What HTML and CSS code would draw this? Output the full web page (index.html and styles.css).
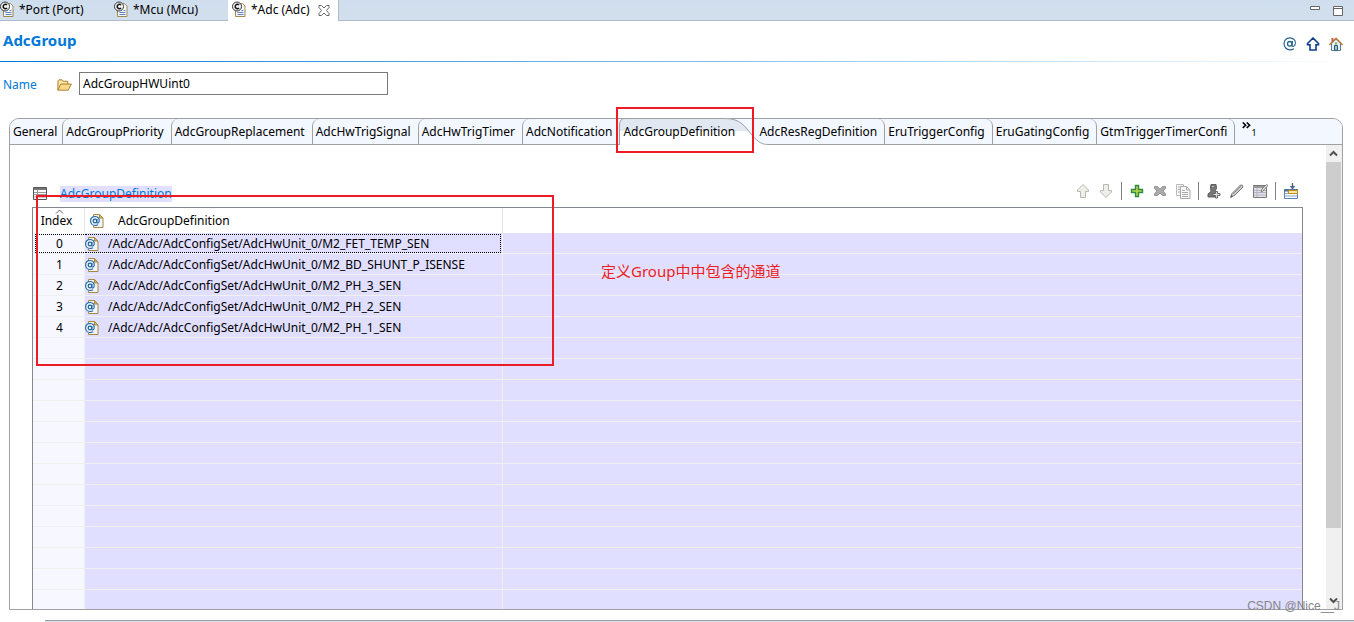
FILE: index.html
```html
<!DOCTYPE html>
<html lang="en">
<head>
<meta charset="utf-8">
<title>AdcGroup</title>
<link rel="stylesheet" href="styles.css">
</head>
<body>
<svg class="defs" aria-hidden="true">
  <symbol id="doc-c" viewBox="0 0 14 16">
    <path d="M3.500 2.500h7l2.500 2.500v10.500h-9.500z" fill="#f3f6fb" stroke="#a08a4c"/>
    <path d="M5.500 11.500h6M5.500 13.500h6M9.500 9.500h2" stroke="#5f86c0"/>
    <circle cx="5" cy="5.500" r="4.500" fill="#f4f4f4" stroke="#333"/>
    <path d="M7 4A2.200 2.200 0 1 0 7 7" fill="none" stroke="#111" stroke-width="1.500"/>
  </symbol>
  <symbol id="at" viewBox="0 0 14 14">
    <circle cx="6.800" cy="6.800" r="2.300" fill="none" stroke="#27628f" stroke-width="1.300"/>
    <path d="M9.500 4l-.6 4.300c0 1.400 1.300 1.500 2.300.6 1.500-1.600 1.400-4.500 0-6.200C8.800.1 4.600.3 2.500 2.600.5 5 .6 8.700 2.700 11c2 2 5.500 2.300 8.300.8" fill="none" stroke="#27628f" stroke-width="1.200"/>
  </symbol>
  <symbol id="doc-at" viewBox="0 0 14 14">
    <path d="M3.500 .5h6l3.500 3.500v9.500h-9.500z" fill="#f1f5fb"/>
    <path d="M3.500 3V.5h6l3.500 3.500v9.500H3.500V12" fill="none" stroke="#a8873c"/>
    <path d="M9.500 .5v3.500h3.500z" fill="#e2b85c" stroke="#a8873c"/>
    <circle cx="5" cy="7" r="5" fill="#e6effa"/>
    <circle cx="5" cy="7" r="1.800" fill="none" stroke="#1d639c" stroke-width="1.200"/>
    <path d="M7 5l-.3 3.400c.6 1 2 .6 2.400-.7C9.800 4.600 8 2.500 5.200 2.500 2.400 2.500.6 4.500.6 7s1.800 4.500 4.400 4.500c1.200 0 2.200-.2 3-.7" fill="none" stroke="#1d639c" stroke-width="1.100"/>
  </symbol>
</svg>

<nav class="editor-tabs">
  <button class="editor-tab"><svg class="i-doc"><use href="#doc-c"/></svg>*Port (Port)</button>
  <button class="editor-tab"><svg class="i-doc"><use href="#doc-c"/></svg>*Mcu (Mcu)</button>
  <button class="editor-tab active"><svg class="i-doc"><use href="#doc-c"/></svg>*Adc (Adc)
    <svg class="i-close" viewBox="0 0 12 11"><path d="M1 .5h2.500l2.500 2.500 2.500-2.500h2.500v2l-2.500 3 2.500 3v2h-2.500l-2.500-2.500-2.500 2.500h-2.500v-2l2.500-3-2.500-3z" fill="#fff" stroke="#666"/></svg>
  </button>
  <div class="window-buttons">
    <button aria-label="Minimize"><svg viewBox="0 0 11 11"><path d="M.5 .5h9v3h-9z" fill="#fff" stroke="#666"/></svg></button>
    <button aria-label="Maximize"><svg viewBox="0 0 11 11"><path d="M.5 .5h9v9h-9zM.5 2.500h9" fill="#fff" stroke="#666"/></svg></button>
  </div>
</nav>

<header class="title-bar">
  <h1>AdcGroup</h1>
  <div class="title-tools">
    <button aria-label="Annotations"><svg viewBox="0 0 14 14"><use href="#at"/></svg></button>
    <button aria-label="Up"><svg viewBox="0 0 14 14"><path d="M7 1L1.500 6.500v1.200H4V13h6V7.700h2.500V6.500z" fill="#fff" stroke="#0b3f8c" stroke-width="1.600"/></svg></button>
    <button aria-label="Home"><svg viewBox="0 0 14 14"><path d="M2.500 6.500v7h9v-7L7 2z" fill="#e6eff6" stroke="#5b7d95"/><path d="M2.500 1h2v3l-2 2z" fill="#c4623a"/><path d="M.5 8L7 1.500 13.500 8" fill="none" stroke="#b97a4a" stroke-width="1.600"/><path d="M5.500 8.500h3v5h-3z" fill="#7fb2d6" stroke="#35617e"/><path d="M6 5.500h2v2H6z" fill="#6fae3a"/><path d="M6.500 10h1v1.500h-1z" fill="#f4e04d"/></svg></button>
  </div>
</header>

<div class="name-row">
  <label for="name">Name</label>
  <svg class="i-folder" viewBox="0 0 16 12"><path d="M1 11.500V1.500l1-1h3.500l1 1.500h5v3" fill="#fbe7a6" stroke="#a97a2a"/><path d="M1 11.500L4 5h11.300L12 11.500z" fill="#f8d98a" stroke="#a97a2a"/></svg>
  <input id="name" type="text" value="AdcGroupHWUint0">
</div>

<main class="folder">
  <div class="folder-tabs">
    <button class="tab">General</button>
    <button class="tab">AdcGroupPriority</button>
    <button class="tab">AdcGroupReplacement</button>
    <button class="tab">AdcHwTrigSignal</button>
    <button class="tab">AdcHwTrigTimer</button>
    <button class="tab">AdcNotification</button>
    <button class="tab selected"><svg class="tab-shape" viewBox="0 0 150 27" aria-hidden="true"><path class="shape-fill" d="M0 27V7Q0 .5 6 .5H106C122 .5 126 9 133 17S143 26 150 26V27z"/><path class="shape-shade" d="M0 13V7Q0 .5 6 .5H106C120 .5 125 6 130 13z"/><path class="shape-line" d="M.5 27V7Q.5 .5 6 .5H106C122 .5 126 9 133 17S143 26.500 150 26.500"/></svg><span>AdcGroupDefinition</span></button>
    <button class="tab after">AdcResRegDefinition</button>
    <button class="tab after">EruTriggerConfig</button>
    <button class="tab after">EruGatingConfig</button>
    <button class="tab after">GtmTriggerTimerConfi</button>
    <button class="more" aria-label="More tabs"><svg viewBox="0 0 9 7"><path d="M.7 .5l3 2.700-3 2.700M4.700 .5l3 2.700-3 2.700" fill="none" stroke="#000" stroke-width="1.500"/></svg><small>1</small></button>
  </div>

  <div class="folder-body">
    <section class="panel">
      <div class="panel-head">
        <svg class="i-table" viewBox="0 0 14 13"><path d="M.5 .5h13v12H.5z" fill="#fff" stroke="#555"/><path d="M1 2h12" stroke="#777" stroke-width="2"/><path d="M1 5.500h12M1 7.500h12M1 10h12M4.500 3v9" stroke="#999"/></svg>
        <h2>AdcGroupDefinition</h2>
        <div class="toolbar">
          <button aria-label="Move up"><svg viewBox="0 0 16 16"><path d="M8 1.500L2.500 7v1.500h3v6h5v-6h3V7z" fill="#eeeeea" stroke="#b9b7ae"/></svg></button>
          <button aria-label="Move down"><svg viewBox="0 0 16 16"><path d="M8 14.500L2.500 9V7.500h3v-6h5v6h3V9z" fill="#eeeeea" stroke="#b9b7ae"/></svg></button>
          <hr>
          <button aria-label="Add"><svg viewBox="0 0 16 16"><path d="M6.500 2.500h3v4h4v3h-4v4h-3v-4h-4v-3h4z" fill="#b9d84a" stroke="#2e8b3d" stroke-width="1.400"/></svg></button>
          <button aria-label="Delete"><svg viewBox="0 0 16 16"><path d="M2.500 3.500h3L8 6l2.500-2.500h3v2L11 8l2.500 2.500v2h-3L8 10l-2.500 2.500h-3v-2L5 8 2.500 5.500z" fill="#aaa" stroke="#999"/></svg></button>
          <button aria-label="Duplicate"><svg viewBox="0 0 16 16"><path d="M1.500 1.500h7v11h-7z" fill="#f7f7f7" stroke="#bbb"/><path d="M3 4h3M3 6.500h3M3 9h3" stroke="#aaa"/><path d="M5.500 3.500h6l3.500 3.500v8.500H5.500z" fill="#fafafa" stroke="#aaa"/><path d="M11.500 3.500V7H15M7 7.500h3M7 9.500h6M7 11.500h6M7 13.500h6" fill="none" stroke="#aaa"/></svg></button>
          <hr>
          <button aria-label="Add reference"><svg viewBox="0 0 16 16"><path d="M5 1.500h5l.5 4L9 8l1 2-1 4H2v-3l3-2.500L4.500 4z" fill="#777" stroke="#5c5c5c"/><path d="M6 3.500h2" stroke="#bbb"/><path d="M9.500 8.500h2v2h2.500v2h-2.500V15h-2v-2.500H7v-2h2.500z" fill="#ddd" stroke="#666"/></svg></button>
          <button aria-label="Edit"><svg viewBox="0 0 16 16"><path d="M1.500 14.500l1.500-4 8.500-8.500q2.500-.5 2.500 2L6 12z" fill="#ccc" stroke="#777"/><path d="M4 11l8-8" stroke="#999"/><path d="M1.500 14.500l1-2.500L4 13.500z" fill="#555"/></svg></button>
          <button aria-label="Edit table"><svg viewBox="0 0 16 16"><path d="M1.500 2.500h13v12h-13z" fill="#e1e1ec" stroke="#777"/><path d="M1 4h13" stroke="#999" stroke-width="2"/><path d="M2 7.500h12M2 9.500h12M2 12h12M5 5v9" stroke="#b4b4c0"/><path d="M9 9l1-3 4.500-4.500 1.500 1L11 8z" fill="#ddd" stroke="#888"/></svg></button>
          <hr>
          <button aria-label="Import"><svg viewBox="0 0 16 16"><path d="M1.500 6.500h13v9h-13z" fill="#f7fbff" stroke="#6082a8"/><path d="M1 7.500h14" stroke="#4d6c91" stroke-width="2"/><path d="M2 10.500h12M2 13h12" stroke="#8aa8c4"/><path d="M5.500 7.500h9v3h-9z" fill="#ffe9a8" stroke="#c98a12"/><path d="M9.500 0v5M7.500 3l2 2.500 2-2.500" fill="none" stroke="#4b6380" stroke-width="1.300"/></svg></button>
        </div>
      </div>

      <div class="table-wrap">
        <table>
          <colgroup><col class="c-index"><col class="c-ref"><col></colgroup>
          <thead><tr>
            <th><svg class="i-sort" viewBox="0 0 9 5"><path d="M1 4.500L4.500 1 8 4.500" fill="none" stroke="#666"/></svg>Index</th>
            <th><div class="head-cell"><svg class="i-at"><use href="#doc-at"/></svg>AdcGroupDefinition</div></th>
            <th></th>
          </tr></thead>
          <tbody>
            <tr class="focused"><td>0</td><td><div class="cell"><svg class="i-at"><use href="#doc-at"/></svg>/Adc/Adc/AdcConfigSet/AdcHwUnit_0/M2_FET_TEMP_SEN</div></td><td></td></tr>
            <tr><td>1</td><td><div class="cell"><svg class="i-at"><use href="#doc-at"/></svg>/Adc/Adc/AdcConfigSet/AdcHwUnit_0/M2_BD_SHUNT_P_ISENSE</div></td><td></td></tr>
            <tr><td>2</td><td><div class="cell"><svg class="i-at"><use href="#doc-at"/></svg>/Adc/Adc/AdcConfigSet/AdcHwUnit_0/M2_PH_3_SEN</div></td><td></td></tr>
            <tr><td>3</td><td><div class="cell"><svg class="i-at"><use href="#doc-at"/></svg>/Adc/Adc/AdcConfigSet/AdcHwUnit_0/M2_PH_2_SEN</div></td><td></td></tr>
            <tr><td>4</td><td><div class="cell"><svg class="i-at"><use href="#doc-at"/></svg>/Adc/Adc/AdcConfigSet/AdcHwUnit_0/M2_PH_1_SEN</div></td><td></td></tr>
            <tr><td></td><td></td><td></td></tr><tr><td></td><td></td><td></td></tr>
            <tr><td></td><td></td><td></td></tr><tr><td></td><td></td><td></td></tr>
            <tr><td></td><td></td><td></td></tr><tr><td></td><td></td><td></td></tr>
            <tr><td></td><td></td><td></td></tr><tr><td></td><td></td><td></td></tr>
            <tr><td></td><td></td><td></td></tr><tr><td></td><td></td><td></td></tr>
            <tr><td></td><td></td><td></td></tr><tr><td></td><td></td><td></td></tr>
            <tr><td></td><td></td><td></td></tr>
          </tbody>
        </table>
      </div>
    </section>

    <div class="scrollbar">
      <button aria-label="Scroll up"><svg viewBox="0 0 9 7"><path d="M1 5.500L4.500 2 8 5.500" fill="none" stroke="#505050" stroke-width="2"/></svg></button>
      <div class="track"><div class="thumb"></div></div>
      <button aria-label="Scroll down"><svg viewBox="0 0 9 7"><path d="M1 1.500L4.500 5 8 1.500" fill="none" stroke="#505050" stroke-width="2"/></svg></button>
    </div>
  </div>
</main>
<div class="next-view"></div>

<div class="mark mark-tab"></div>
<div class="mark mark-table"></div>
<p class="note">定义Group中中包含的通道</p>
<p class="watermark">CSDN @Nice__J</p>
</body>
</html>
```
FILE: styles.css
```css
* { box-sizing: border-box; }

body {
  margin: 0;
  height: 100vh;
  overflow: hidden;
  display: flex;
  flex-direction: column;
  background: #fff;
  color: #000;
  font: 12px/16px "Noto Sans", "Noto Sans CJK SC", sans-serif;
  font-variant-ligatures: none;
}

button {
  margin: 0;
  padding: 0;
  border: 0;
  background: none;
  color: inherit;
  font: inherit;
  white-space: nowrap;
}

svg { display: block; flex: none; }
.defs { position: absolute; width: 0; height: 0; }

/* Editor tabs */
.editor-tabs {
  flex: none;
  display: flex;
  height: 21px;
  background: linear-gradient(#cfdeee, #d2dfec);
  border-bottom: 1px solid #b0bacb;
}
.editor-tab {
  display: flex;
  align-items: center;
  gap: 5px;
  width: 114px;
  height: 20px;
}
.editor-tab.active {
  width: 111px;
  height: 21px;
  padding: 0 0 1px 4px;
  background: #fff;
  border-right: 1px solid #b0bacb;
}
.i-doc { width: 14px; height: 16px; margin-bottom: 2px; }
.i-close { width: 12px; height: 11px; margin-left: 3px; }
.window-buttons {
  margin-left: auto;
  padding: 3px 10px 0 0;
  display: flex;
  gap: 12px;
}
.window-buttons svg { width: 11px; height: 11px; }

/* Title */
.title-bar {
  flex: none;
  display: flex;
  align-items: center;
  justify-content: space-between;
  height: 41px;
  padding: 0 11px 0 3px;
  border-bottom: 1px solid;
  border-image: linear-gradient(90deg, #0078d7, #fff) 1;
}
h1 {
  margin: 0;
  padding-bottom: 2px;
  color: #0078d7;
  font-size: 15px;
  line-height: 20px;
}
.title-tools { display: flex; gap: 9px; padding-top: 5px; }
.title-tools svg { width: 14px; height: 14px; }

/* Name field */
.name-row {
  flex: none;
  display: flex;
  align-items: center;
  padding: 10px 0 23px 3px;
}
.name-row label { width: 54px; padding-top: 3px; color: #0078d7; }
.i-folder { width: 15px; height: 12px; margin: 3px 7px 0 0; }
.name-row input {
  width: 309px;
  height: 23px;
  padding: 0 3px;
  border: 1px solid #7a7a7a;
  font: inherit;
}

/* Tab folder */
.folder {
  flex: 1;
  min-height: 0;
  display: flex;
  flex-direction: column;
  margin: 0 11px 0 9px;
  border: 1px solid #a0a0a0;
  border-radius: 10px 10px 0 0;
}
.folder-tabs {
  flex: none;
  display: flex;
  height: 26px;
  background: #f3f7ff;
  border-bottom: 1px solid #a0a0a0;
  border-radius: 9px 9px 0 0;
}
.tab {
  padding: 0 7px 0 3px;
  border-left: 1px solid #a0a0a0;
  border-top-left-radius: 7px;
}
.tab:first-child { border-left: 0; padding-right: 5px; }
.tab.after {
  border-left: 0;
  border-right: 1px solid #a0a0a0;
  border-radius: 0 7px 0 0;
}
.tab.selected {
  position: relative;
  width: 137px;
  border: 0;
  text-align: left;
}
.tab.selected span { position: relative; padding-left: 1px; }
.tab-shape {
  position: absolute;
  left: 0;
  top: -1px;
  width: 150px;
  height: 27px;
}
.tab.after { position: relative; }
.shape-fill { fill: #fff; }
.shape-shade { fill: #e1e8f2; }
.shape-line { fill: none; stroke: #a0a0a0; }
.more { display: flex; padding: 3px 7px; }
.more svg { width: 9px; height: 7px; }
.more small { font-size: 9px; line-height: 22px; }

.folder-body { flex: 1; min-height: 0; display: flex; }
.panel {
  flex: 1;
  min-width: 0;
  display: flex;
  flex-direction: column;
  padding: 36px 23px 0 22px;
}
.panel-head {
  flex: none;
  display: flex;
  align-items: center;
  height: 26px;
}
.i-table { width: 14px; height: 13px; margin: 0 13px 2px 1px; }
h2 {
  margin: 0;
  background: #e0dfff;
  color: #0078d7;
  font: inherit;
}
.toolbar {
  margin: 0 4px 6px auto;
  display: flex;
  align-items: center;
  gap: 7px;
}
.toolbar svg { width: 16px; height: 16px; }
.toolbar hr {
  width: 1px;
  height: 18px;
  margin: 0;
  border: 0;
  background: #808080;
}

/* Reference table */
.table-wrap {
  flex: 1;
  min-height: 0;
  overflow: hidden;
  border: 1px solid #828790;
  border-bottom: 0;
}
table { width: 100%; border-collapse: separate; border-spacing: 0; table-layout: fixed; }
.c-index { width: 52px; }
.c-ref { width: 418px; }
th, td { padding: 0; white-space: nowrap; }
th {
  height: 25px;
  font-weight: normal;
  border-right: 1px solid #e5e5e5;
}
th:first-child { position: relative; padding-right: 4px; }
th:last-child, td:last-child { border-right: 0; }
.i-sort { position: absolute; left: 22px; top: 1px; width: 9px; height: 5px; }
.i-at { width: 14px; height: 14px; }
.head-cell { display: flex; align-items: center; gap: 14px; padding-left: 5px; }
td {
  height: 21px;
  padding-top: 1px;
  background: #e0dfff;
  border-right: 1px solid #f0f0f0;
  border-bottom: 1px solid #f0f0f0;
}
td:first-child { padding-left: 2px; background: #f6f7ff; text-align: center; }
.cell { display: flex; align-items: center; gap: 9px; }

/* Dotted focus frame across the first two cells */
.focused td { position: relative; }
.focused td:nth-child(-n+2)::after {
  content: "";
  position: absolute;
  inset: 1px 0 0 2px;
  border: 1px dotted #000;
  border-right: 0;
}
.focused td:nth-child(2)::after {
  inset: 1px 1px 0 0;
  border-right: 1px dotted #000;
  border-left: 0;
}

/* Scrollbar */
.scrollbar {
  flex: none;
  display: flex;
  flex-direction: column;
  width: 16px;
  padding-right: 1px;
  background: #f0f0f0;
}
.scrollbar button { height: 17px; display: grid; place-items: center; }
.scrollbar svg { width: 9px; height: 7px; }
.track { flex: 1; }
.thumb { height: 85%; background: #cdcdcd; }

.next-view {
  flex: none;
  height: 2px;
  margin: 10px 0 0 45px;
  background: #d2dfec;
  border-top: 1px solid #a0a0a0;
}

/* Annotations over the view */
.mark { position: absolute; border: 2px solid #ed1c24; }
.mark-tab { left: 616px; top: 107px; width: 138px; height: 46px; }
.mark-table { left: 36px; top: 195px; width: 518px; height: 171px; }
.note {
  position: absolute;
  left: 601px;
  top: 260px;
  margin: 0;
  color: #ed1c24;
  font: 15px/22px "Noto Sans", "Noto Sans CJK SC", sans-serif;
}
.watermark {
  position: absolute;
  right: 14px;
  bottom: 8px;
  margin: 0;
  color: #85858b;
  font: 12px/16px "Liberation Sans", sans-serif;
}
```
